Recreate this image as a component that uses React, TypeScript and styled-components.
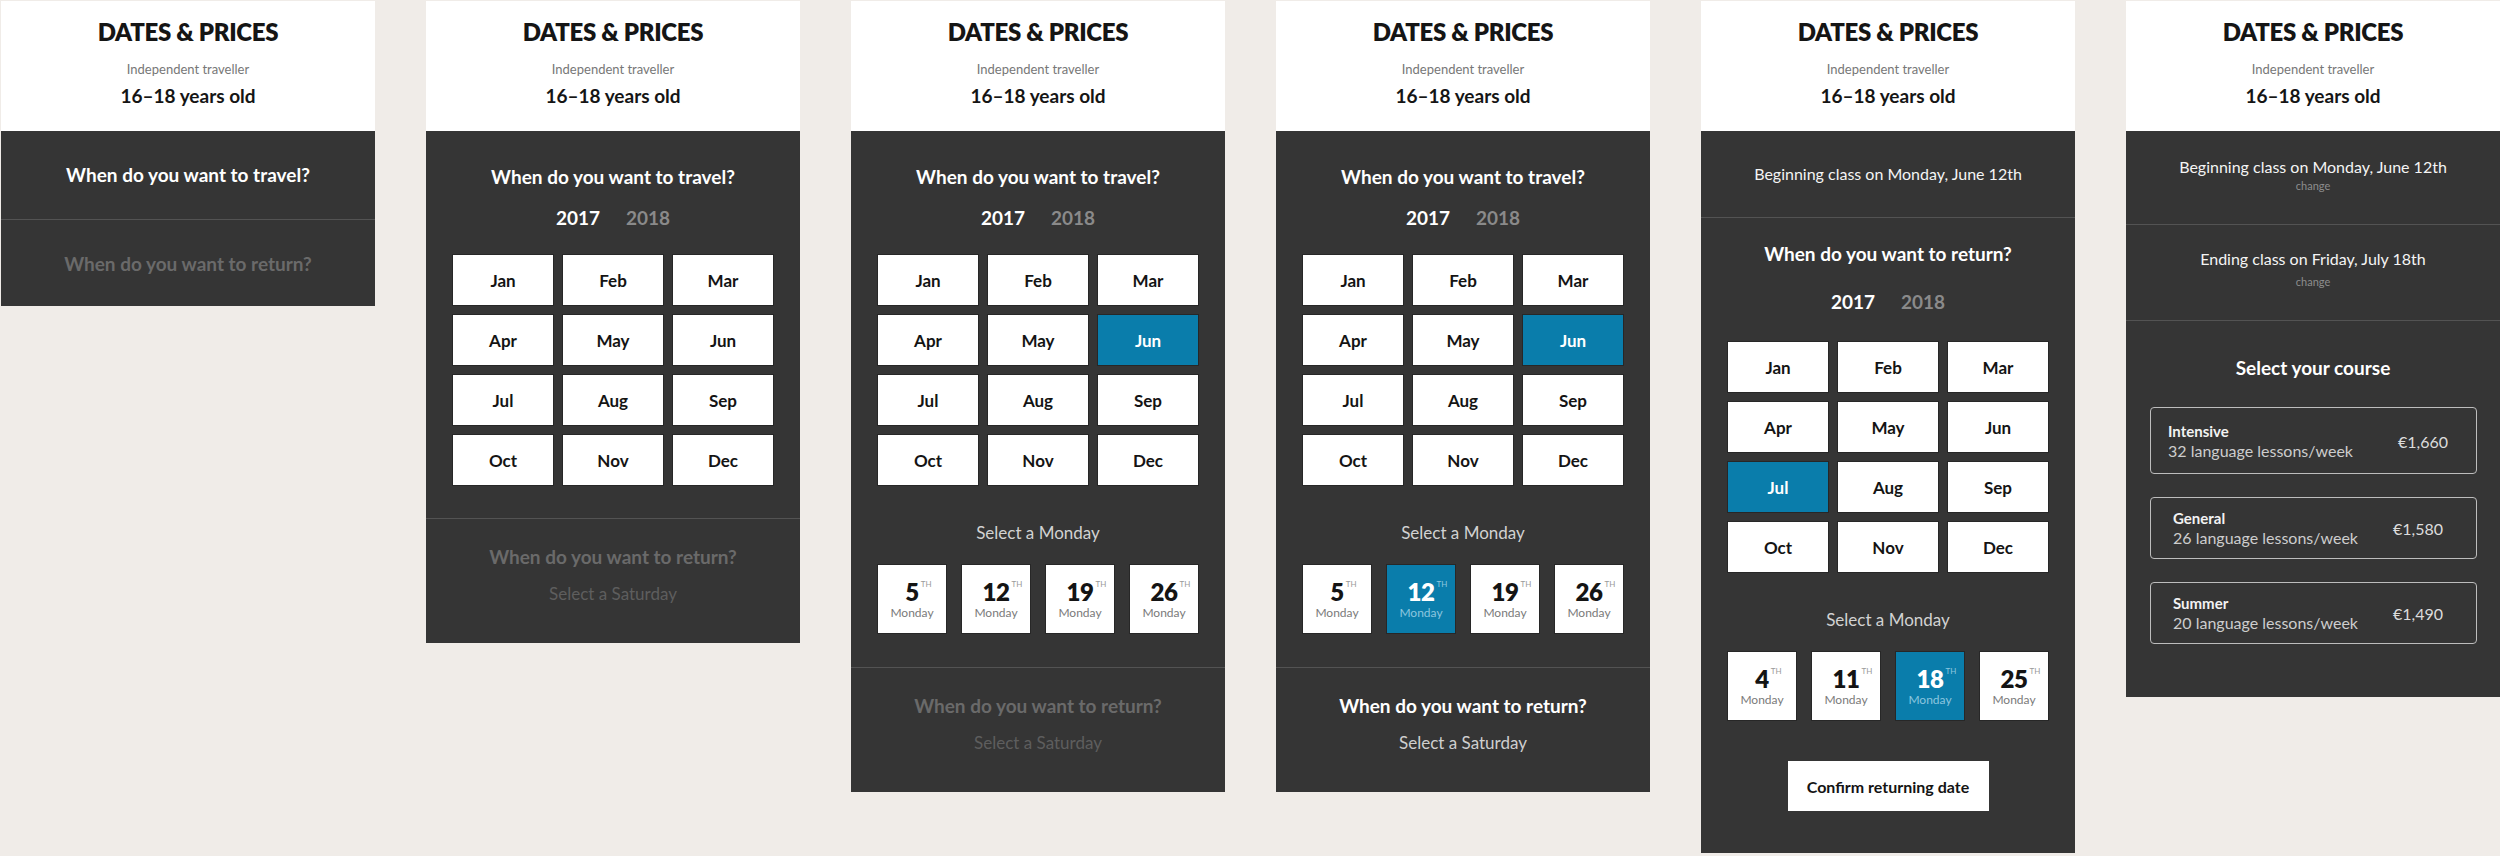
import React from "react";
import styled, { createGlobalStyle } from "styled-components";

const GlobalStyle = createGlobalStyle`
  html, body {
    margin: 0;
    padding: 0;
    background: #f0ece8;
    overflow: hidden;
  }
  body {
    font-family: Lato, "Open Sans", "Liberation Sans", sans-serif;
    -webkit-font-smoothing: antialiased;
  }
`;

const MONTHS = ["Jan", "Feb", "Mar", "Apr", "May", "Jun", "Jul", "Aug", "Sep", "Oct", "Nov", "Dec"];

const Page = styled.div`
  display: flex;
  align-items: flex-start;
  gap: 51px;
  padding: 1px 0 0 1px;
  width: max-content;
`;

const Panel = styled.section`
  width: 374px;
  flex-shrink: 0;
  background: #353535;
  color: #fff;
`;

const Header = styled.header`
  height: 130px;
  box-sizing: border-box;
  padding-top: 17px;
  background: #fff;
  display: flex;
  flex-direction: column;
  align-items: center;
  color: #151515;
`;

const HeaderTitle = styled.h2`
  margin: 0;
  font-size: 24px;
  line-height: 28px;
  font-weight: 800;
  letter-spacing: -0.3px;
`;

const HeaderSub = styled.div`
  margin-top: 15px;
  font-size: 13px;
  line-height: 16px;
  color: #777;
`;

const HeaderAge = styled.div`
  margin-top: 7px;
  font-size: 19px;
  line-height: 24px;
  font-weight: 700;
`;

const Section = styled.div<{ $pt?: number; $pb?: number }>`
  display: flex;
  flex-direction: column;
  align-items: center;
  padding: ${(p) => p.$pt ?? 32}px 0 ${(p) => p.$pb ?? 32}px;
  & + & {
    border-top: 1px solid #535353;
  }
`;

const Heading = styled.h3<{ $muted?: boolean }>`
  margin: 0;
  font-size: 19px;
  line-height: 24px;
  font-weight: 700;
  color: ${(p) => (p.$muted ? "#6a6a6a" : "#fff")};
`;

const SubText = styled.div<{ $muted?: boolean }>`
  margin-top: 15px;
  font-size: 17px;
  line-height: 20px;
  color: ${(p) => (p.$muted ? "#5e5e5e" : "#cfcfcf")};
`;

const YearRow = styled.div<{ $mt: number }>`
  display: flex;
  gap: 26px;
  margin-top: ${(p) => p.$mt}px;
`;

const Year = styled.span<{ $active?: boolean }>`
  font-size: 19px;
  line-height: 24px;
  font-weight: 700;
  color: ${(p) => (p.$active ? "#fff" : "#8a8a8a")};
`;

const MonthGrid = styled.div<{ $mt: number }>`
  display: grid;
  grid-template-columns: repeat(3, 100px);
  grid-auto-rows: 50px;
  gap: 10px;
  margin-top: ${(p) => p.$mt}px;
`;

const MonthButton = styled.div<{ $selected?: boolean }>`
  display: flex;
  align-items: center;
  justify-content: center;
  background: ${(p) => (p.$selected ? "#0a7dab" : "#fff")};
  color: ${(p) => (p.$selected ? "#fff" : "#141414")};
  font-size: 17px;
  font-weight: 700;
  box-shadow: 0 0 0 1px rgba(0, 0, 0, 0.25);
`;

const Hint = styled.div`
  margin-top: 38px;
  font-size: 17px;
  line-height: 20px;
  color: #d2d2d2;
`;

const DayRow = styled.div`
  display: grid;
  grid-template-columns: repeat(4, 68px);
  gap: 16px;
  margin-top: 22px;
`;

const DayBox = styled.div<{ $selected?: boolean }>`
  height: 68px;
  display: flex;
  flex-direction: column;
  align-items: center;
  padding-top: 14px;
  box-sizing: border-box;
  background: ${(p) => (p.$selected ? "#0a7dab" : "#fff")};
  color: ${(p) => (p.$selected ? "#fff" : "#141414")};
  box-shadow: 0 0 0 1px rgba(0, 0, 0, 0.25);
`;

const DayNum = styled.div`
  position: relative;
  font-size: 24px;
  line-height: 26px;
  font-weight: 800;
  letter-spacing: -0.5px;
`;

const Sup = styled.span<{ $selected?: boolean }>`
  position: absolute;
  left: 100%;
  top: 1px;
  margin-left: 2px;
  font-size: 8px;
  line-height: 8px;
  font-weight: 400;
  letter-spacing: 0;
  color: ${(p) => (p.$selected ? "#8cc6df" : "#9a9a9a")};
`;

const DayName = styled.div<{ $selected?: boolean }>`
  margin-top: 1px;
  font-size: 12px;
  line-height: 14px;
  color: ${(p) => (p.$selected ? "#8cc6df" : "#7a7a7a")};
`;

const ConfirmButton = styled.div`
  margin-top: 41px;
  width: 201px;
  height: 50px;
  display: flex;
  align-items: center;
  justify-content: center;
  background: #fff;
  color: #141414;
  font-size: 16px;
  font-weight: 700;
`;

const Summary = styled.div`
  font-size: 16px;
  line-height: 24px;
  color: #f4f4f4;
`;

const ChangeLink = styled.div<{ $mt?: number }>`
  margin-top: ${(p) => p.$mt ?? 0}px;
  font-size: 11px;
  line-height: 14px;
  color: #8d8d8d;
`;

const CourseList = styled.div`
  display: flex;
  flex-direction: column;
  gap: 23px;
  margin-top: 27px;
  align-self: stretch;
  padding: 0 23px 0 24px;
`;

const CourseCard = styled.div<{ $pad: string }>`
  display: flex;
  align-items: center;
  justify-content: space-between;
  padding: ${(p) => p.$pad};
  border: 1px solid #bdbdbd;
  border-radius: 4px;
`;

const CourseName = styled.div`
  font-size: 15px;
  line-height: 20px;
  font-weight: 700;
  color: #f2f2f2;
`;

const CourseMeta = styled.div`
  font-size: 16px;
  line-height: 20px;
  color: #cdcdcd;
`;

const CoursePrice = styled.div`
  font-size: 16px;
  color: #dcdcdc;
`;

const PanelHeader = () => (
  <Header>
    <HeaderTitle>DATES &amp; PRICES</HeaderTitle>
    <HeaderSub>Independent traveller</HeaderSub>
    <HeaderAge>16–18 years old</HeaderAge>
  </Header>
);

const YearsAndMonths = ({ selected, yearGap, gridGap }: { selected?: string; yearGap: number; gridGap: number }) => (
  <>
    <YearRow $mt={yearGap}>
      <Year $active>2017</Year>
      <Year>2018</Year>
    </YearRow>
    <MonthGrid $mt={gridGap}>
      {MONTHS.map((m) => (
        <MonthButton key={m} $selected={m === selected}>
          {m}
        </MonthButton>
      ))}
    </MonthGrid>
  </>
);

const MondayPicker = ({ days, selected }: { days: number[]; selected?: number }) => (
  <>
    <Hint>Select a Monday</Hint>
    <DayRow>
      {days.map((d) => (
        <DayBox key={d} $selected={d === selected}>
          <DayNum>
            {d}
            <Sup $selected={d === selected}>TH</Sup>
          </DayNum>
          <DayName $selected={d === selected}>Monday</DayName>
        </DayBox>
      ))}
    </DayRow>
  </>
);

const ReturnPrompt = ({ active }: { active?: boolean }) => (
  <Section $pt={26} $pb={39}>
    <Heading $muted={!active}>When do you want to return?</Heading>
    <SubText $muted={!active}>Select a Saturday</SubText>
  </Section>
);

const COURSES = [
  { name: "Intensive", lessons: 32, price: "€1,660", pad: "13px 28px 12px 17px" },
  { name: "General", lessons: 26, price: "€1,580", pad: "10px 33px 10px 22px" },
  { name: "Summer", lessons: 20, price: "€1,490", pad: "10px 33px 10px 22px" },
];

export default function App() {
  const mondaysJune = [5, 12, 19, 26];
  return (
    <>
      <GlobalStyle />
      <Page>
        <Panel>
          <PanelHeader />
          <Section>
            <Heading>When do you want to travel?</Heading>
          </Section>
          <Section $pt={32} $pb={30}>
            <Heading $muted>When do you want to return?</Heading>
          </Section>
        </Panel>

        <Panel>
          <PanelHeader />
          <Section $pt={34} $pb={33}>
            <Heading>When do you want to travel?</Heading>
            <YearsAndMonths yearGap={17} gridGap={25} />
          </Section>
          <ReturnPrompt />
        </Panel>

        <Panel>
          <PanelHeader />
          <Section $pt={34} $pb={34}>
            <Heading>When do you want to travel?</Heading>
            <YearsAndMonths selected="Jun" yearGap={17} gridGap={25} />
            <MondayPicker days={mondaysJune} />
          </Section>
          <ReturnPrompt />
        </Panel>

        <Panel>
          <PanelHeader />
          <Section $pt={34} $pb={34}>
            <Heading>When do you want to travel?</Heading>
            <YearsAndMonths selected="Jun" yearGap={17} gridGap={25} />
            <MondayPicker days={mondaysJune} selected={12} />
          </Section>
          <ReturnPrompt active />
        </Panel>

        <Panel>
          <PanelHeader />
          <Section $pt={31} $pb={31}>
            <Summary>Beginning class on Monday, June 12th</Summary>
          </Section>
          <Section $pt={24} $pb={42}>
            <Heading>When do you want to return?</Heading>
            <YearsAndMonths selected="Jul" yearGap={24} gridGap={28} />
            <MondayPicker days={[4, 11, 18, 25]} selected={18} />
            <ConfirmButton>Confirm returning date</ConfirmButton>
          </Section>
        </Panel>

        <Panel>
          <PanelHeader />
          <Section $pt={24} $pb={31}>
            <Summary>Beginning class on Monday, June 12th</Summary>
            <ChangeLink>change</ChangeLink>
          </Section>
          <Section $pt={22} $pb={31}>
            <Summary>Ending class on Friday, July 18th</Summary>
            <ChangeLink $mt={4}>change</ChangeLink>
          </Section>
          <Section $pt={35} $pb={53}>
            <Heading>Select your course</Heading>
            <CourseList>
              {COURSES.map((c) => (
                <CourseCard key={c.name} $pad={c.pad}>
                  <div>
                    <CourseName>{c.name}</CourseName>
                    <CourseMeta>{c.lessons} language lessons/week</CourseMeta>
                  </div>
                  <CoursePrice>{c.price}</CoursePrice>
                </CourseCard>
              ))}
            </CourseList>
          </Section>
        </Panel>
      </Page>
    </>
  );
}
